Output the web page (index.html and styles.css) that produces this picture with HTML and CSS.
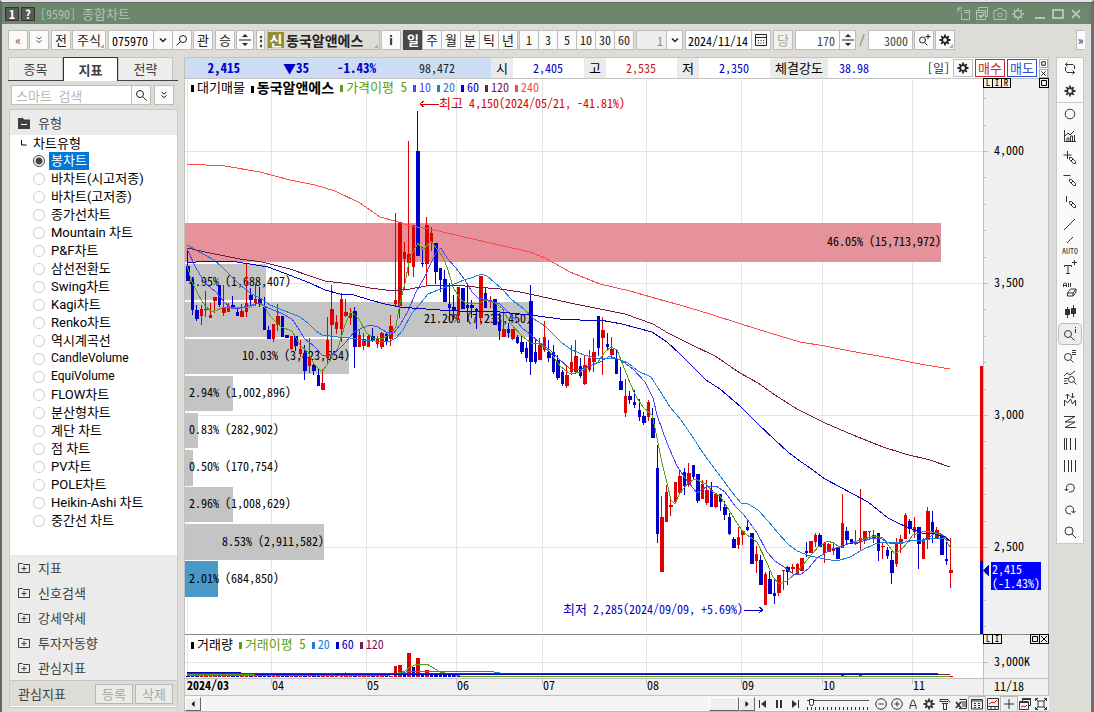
FILE: index.html
```html
<!DOCTYPE html>
<html lang="ko">
<head>
<meta charset="utf-8">
<title>[9590] 종합차트</title>
<link rel="stylesheet" href="styles.css">
</head>
<body>
<svg class="defs" aria-hidden="true">
  <symbol id="gear" viewBox="0 0 12 12"><path d="M6 .5v11M.5 6h11M2.200 2.200l7.600 7.600M9.800 2.200L2.200 9.800" stroke="currentColor" stroke-width="1.800"/><circle cx="6" cy="6" r="2.800" fill="#fafafa" stroke="currentColor" stroke-width="1.800"/></symbol>
  <symbol id="lens" viewBox="0 0 12 12"><circle cx="5" cy="5" r="3.500"/><path d="M7.500 7.500l4 4"/></symbol>
  <symbol id="lensl" viewBox="0 0 12 12"><circle cx="7" cy="5" r="3.500"/><path d="M4.500 7.500l-4 4"/></symbol>
  <symbol id="down" viewBox="0 0 12 12"><path d="M3 4.500l3 3 3-3" stroke-width="1.500"/></symbol>
  <symbol id="box" viewBox="0 0 8 8"><path d="M1.500 1.500h5v5h-5z"/></symbol>
  <symbol id="folder" viewBox="0 0 12 12"><path d="M.5 10.500V1.500h4l1 1h6v8zM6 4v5M3.500 6.500h5"/></symbol>
</svg>

<div class="window">
  <header class="titlebar">
    <span class="tag">1</span><button class="tag">?</button>
    <h1>[9590] <span class="ko">종합차트</span></h1>
    <div class="window-tools">
      <button aria-label="분리"><svg viewBox="0 0 14 14"><path d="M1 5V1h4M1 1l4 4M4.500 6v6.500h8v-9H7M7 5.500h5"/></svg></button>
      <button aria-label="저장"><svg viewBox="0 0 14 14"><path d="M3.500 3V.5h9v9H11M1.500 3.500h9v9h-9zM1.500 5.500h9"/><path d="M4 8l2 2 3-3" stroke-width="2"/></svg></button>
      <button aria-label="캡처"><svg viewBox="0 0 14 14"><path d="M1 3.500h3l1-2h4l1 2h3v9H1z"/><circle cx="7" cy="8" r="2.300"/></svg></button>
      <button aria-label="설정"><svg viewBox="0 0 14 14"><circle cx="7" cy="7" r="3.500" stroke-width="1.500"/><path d="M7 1v2M7 11v2M1 7h2M11 7h2M3 3l1.500 1.500M9.500 9.500L11 11M11 3L9.500 4.500M3 11l1.500-1.500" stroke-width="1.500"/></svg></button>
      <button aria-label="최소화" class="gap"><svg viewBox="0 0 14 14"><path d="M2 11h10" stroke-width="2"/></svg></button>
      <button aria-label="최대화"><svg viewBox="0 0 14 14"><path d="M2 3h10v8H2z" stroke-width="2"/></svg></button>
      <button aria-label="닫기"><svg viewBox="0 0 14 14"><path d="M3 3l8 8M11 3l-8 8" stroke-width="2"/></svg></button>
    </div>
  </header>

  <div class="toolbar">
    <button class="btn dim">«</button>
    <button class="btn dim" aria-label="더보기"><svg class="ico"><path d="M3.500 3l2.500 2 2.500-2M3.500 6.500l2.500 2 2.500-2"/></svg></button>
    <button class="btn ko gapl">전</button>
    <button class="btn ko corner w34">주식</button>
    <div class="joined gapl">
      <input class="field code" aria-label="종목코드" value="075970">
      <button class="btn" aria-label="목록"><svg class="ico"><use href="#down"/></svg></button>
      <button class="btn" aria-label="찾기"><svg class="ico"><use href="#lensl"/></svg></button>
    </div>
    <button class="btn ko">관</button>
    <button class="btn ko gapl">승</button>
    <button class="btn spin" aria-label="종목 이동"><svg viewBox="0 0 12 18"><path d="M-2 9h16"/><path d="M3 6l3-3 3 3zM3 12l3 3 3-3z" fill="currentColor" stroke="none"/></svg></button>
    <button class="btn thin gapl">⋮</button>
    <button class="btn name corner gapl"><span class="badge">신</span>동국알앤에스</button>
    <button class="btn bold">i</button>
    <div class="joined ko gapl">
      <button class="btn on">일</button><button class="btn">주</button><button class="btn">월</button><button class="btn">분</button><button class="btn">틱</button><button class="btn">년</button>
    </div>
    <div class="joined">
      <button class="btn">1</button><button class="btn">3</button><button class="btn">5</button><button class="btn">10</button><button class="btn">30</button><button class="btn">60</button>
    </div>
    <div class="joined gapl">
      <input class="field unit" aria-label="주기" value="1">
      <button class="btn slim" aria-label="주기 목록"><svg class="ico"><use href="#down"/></svg></button>
    </div>
    <div class="joined gapl">
      <input class="field date" aria-label="날짜" value="2024/11/14">
      <button class="btn" aria-label="달력"><svg class="ico"><path d="M.5.500h11v11H.5zM.5 3.500h11M3 6.500h1m1.500 0h1m1.500 0h1M3 9h1m1.500 0h1m1.500 0h1"/></svg></button>
    </div>
    <button class="btn ko off gapl">당</button>
    <div class="joined gapl">
      <input class="field num" aria-label="봉 수" value="170">
      <button class="btn slim" aria-label="봉 수 증감"><svg viewBox="0 0 12 18"><path d="M-2 9h16"/><path d="M3 6l3-3 3 3zM3 12l3 3 3-3z" fill="currentColor" stroke="none"/></svg></button>
    </div>
    <span class="slash">/</span>
    <input class="field num" aria-label="전체 봉 수" value="3000">
    <button class="btn" aria-label="확대 검색"><svg class="ico"><circle cx="4.500" cy="6" r="3"/><path d="M6.500 8.500l3 3M10 0v5M7.500 2.500h5"/></svg></button>
    <button class="btn corner" aria-label="차트 설정"><svg class="ico"><use href="#gear"/></svg></button>
    <button class="btn more">»</button>
  </div>

  <main class="body">
    <aside class="side">
      <nav class="tabs"><button>종목</button><button class="sel">지표</button><button>전략</button></nav>
      <div class="search">
        <div class="joined"><input class="field" aria-label="스마트 검색" placeholder="스마트 검색"><button class="btn" aria-label="검색"><svg class="ico"><use href="#lens"/></svg></button></div>
        <button class="btn" aria-label="펼치기"><svg class="ico"><path d="M3.500 3l2.500 2 2.500-2M3.500 6.500l2.500 2 2.500-2"/></svg></button>
      </div>
      <section class="panel">
        <button class="group"><svg class="ico"><path d="M0 1h5l1 1.500h6V12H0z" fill="currentColor" stroke="none"/><path d="M3 7.500h6" stroke="#fff"/></svg>유형</button>
        <div class="tree" id="tree">
          <div class="root"><svg class="ico"><path d="M3.500 2v5h5"/></svg>차트유형</div>
          <label><input type="radio" name="t" checked><span>봉차트</span></label>
          <label><input type="radio" name="t"><span>바차트(시고저종)</span></label>
          <label><input type="radio" name="t"><span>바차트(고저종)</span></label>
          <label><input type="radio" name="t"><span>종가선차트</span></label>
          <label><input type="radio" name="t"><span>Mountain 차트</span></label>
          <label><input type="radio" name="t"><span>P&amp;F차트</span></label>
          <label><input type="radio" name="t"><span>삼선전환도</span></label>
          <label><input type="radio" name="t"><span>Swing차트</span></label>
          <label><input type="radio" name="t"><span>Kagi차트</span></label>
          <label><input type="radio" name="t"><span>Renko차트</span></label>
          <label><input type="radio" name="t"><span>역시계곡선</span></label>
          <label><input type="radio" name="t"><span class="latin">CandleVolume</span></label>
          <label><input type="radio" name="t"><span class="latin">EquiVolume</span></label>
          <label><input type="radio" name="t"><span>FLOW차트</span></label>
          <label><input type="radio" name="t"><span>분산형차트</span></label>
          <label><input type="radio" name="t"><span>계단 차트</span></label>
          <label><input type="radio" name="t"><span>점 차트</span></label>
          <label><input type="radio" name="t"><span>PV차트</span></label>
          <label><input type="radio" name="t"><span>POLE차트</span></label>
          <label><input type="radio" name="t"><span>Heikin-Ashi 차트</span></label>
          <label><input type="radio" name="t"><span>중간선 차트</span></label>
        </div>
        <button class="group"><svg class="ico"><use href="#folder"/></svg>지표</button>
        <button class="group"><svg class="ico"><use href="#folder"/></svg>신호검색</button>
        <button class="group"><svg class="ico"><use href="#folder"/></svg>강세약세</button>
        <button class="group"><svg class="ico"><use href="#folder"/></svg>투자자동향</button>
        <button class="group"><svg class="ico"><use href="#folder"/></svg>관심지표</button>
        <footer class="foot"><span>관심지표</span><button disabled>등록</button><button disabled>삭제</button></footer>
      </section>
    </aside>

    <section class="center">
      <div class="quote">
        <div class="now"><b class="price">2,415</b><b class="diff">▼35</b><b class="rate">-1.43%</b><span class="vol">98,472</span></div>
        <span class="key">시</span><span class="val">2,405</span>
        <span class="key">고</span><span class="val up">2,535</span>
        <span class="key">저</span><span class="val">2,350</span>
        <span class="key wide">체결강도</span><span class="val strength">38.98</span>
        <span class="period">[일]</span>
        <button class="btn" aria-label="설정"><svg class="ico"><use href="#gear"/></svg></button>
        <button class="trade buy">매수</button>
        <button class="trade sell">매도</button>
        <span class="mini"><button aria-label="최대화"><svg viewBox="0 0 7 8"><path d="M1.500 2h4v4h-4z"/></svg></button><button aria-label="닫기"><svg viewBox="0 0 7 8"><path d="M1 1.500l5 5M6 1.500l-5 5"/></svg></button></span>
      </div>
      <div class="chart">
        <svg id="chart" viewBox="184 79 865 617" preserveAspectRatio="xMinYMin meet"></svg>
        <div class="legend"><span class="c0 ko">대기매물</span><span class="c0 strong">동국알앤에스</span><span class="c5 ko">가격이평 5</span><span class="c10">10</span><span class="c20">20</span><span class="c60">60</span><span class="c120">120</span><span class="c240">240</span></div>
        <div class="legend lower"><span class="c0 ko">거래량</span><span class="c5 ko">거래이평 5</span><span class="c20">20</span><span class="c60">60</span><span class="c120">120</span></div>
        <div class="pane-tools"><button>L</button><button>I</button><button>R</button><button class="last" aria-label="최대화"><svg><use href="#box"/></svg></button></div>
        <div class="pane-tools lower"><button>L</button><button>I</button><button class="last" aria-label="최대화"><svg><use href="#box"/></svg></button><button aria-label="닫기"><svg viewBox="0 0 8 8"><path d="M1 1l6 6M7 1L1 7"/></svg></button></div>
      </div>
      <div class="bottom">
        <button class="arrow" aria-label="왼쪽"><svg viewBox="0 0 8 8"><path d="M5.500 1v6l-3-3z"/></svg></button>
        <div class="track"><div class="thumb"></div></div>
        <button class="arrow" aria-label="오른쪽"><svg viewBox="0 0 8 8"><path d="M2.500 1v6l3-3z"/></svg></button>
        <div class="play">
          <button aria-label="처음"><svg class="ico"><path d="M2.500 2v8"/><path d="M9 2v8L4 6z" fill="currentColor" stroke="none"/></svg></button>
          <button aria-label="정지"><svg class="ico"><path d="M4 2v8M8 2v8" stroke-width="2"/></svg></button>
          <button aria-label="끝"><svg class="ico"><path d="M9.500 2v8"/><path d="M3 2v8l5-4z" fill="currentColor" stroke="none"/></svg></button>
        </div>
        <input type="range" class="speed" aria-label="속도" value="4">
        <div class="tools">
          <button aria-label="축소"><svg class="ico"><circle cx="6" cy="6" r="5.300"/><path d="M3.500 6h5"/></svg></button>
          <button aria-label="확대"><svg class="ico"><circle cx="6" cy="6" r="5.300"/><path d="M3.500 6h5M6 3.500v5"/></svg></button>
          <button aria-label="글자"><svg class="ico"><path d="M3 11V8l2.500-6h1L9 8v3M3.500 7.500h5"/></svg></button>
          <button aria-label="설정"><svg class="ico"><use href="#gear"/></svg></button>
          <button aria-label="도구"><svg class="ico"><path d="M1 1.500h8l2 3M1 3.500h8M1 1.500v2M4.500 5.500v6h3v-6zM3 5.500h6"/></svg></button>
          <button aria-label="엑셀"><svg class="ico"><path d="M4.500 1.500h7v9H4M6 4h5M7 6h4M7 8h4"/><path d="M1 4l5 6M6 4l-5 6" stroke-width="1.800"/></svg></button>
          <button aria-label="표" class="set"><svg class="ico"><path d="M.5 1.500h11v9.500H.5zM.5 3h11M3 5.500h2m2 0h2M3 7.500h2m2 0h2M3 9.500h2m2 0h2"/></svg></button>
          <button aria-label="차트"><svg class="ico"><path d="M.5.500h11v11H.5zM.5 8.500h11M4 8.500v3M8 8.500v3"/><path d="M2 6l3-2 2 1 3-3" stroke="#d00"/></svg></button>
          <button aria-label="십자선" class="set"><svg class="ico"><path d="M6 1v10M1 6h10"/></svg></button>
          <button aria-label="창"><svg class="ico"><path d="M3.500 3V.500h8v7H10M.5 4h9v7.500h-9z"/><path d="M.5 4h9M3.500 1h8" stroke-width="2"/><path d="M2 9l2-1 2 1 2-2" stroke="#d00"/></svg></button>
          <button aria-label="전체화면"><svg class="ico"><path d="M.5 3V.500H3M9 .5h2.500V3M11.500 9v2.500H9M3 11.500H.5V9M3 3h6v6H3zM1 1l2 2M11 1L9 3M1 11l2-2M11 11L9 9"/></svg></button>
        </div>
      </div>
    </section>

    <aside class="rail">
      <button aria-label="새로고침"><svg viewBox="0 0 16 16"><path d="M5.500 1.500l-2 2 2 2M3.500 3.500H11l1.500 1.500v3M3.500 6v3.500L5 11.500h7.500M10.500 9.500l2 2-2 2"/></svg></button>
      <button aria-label="설정"><svg class="ico"><use href="#gear"/></svg></button>
      <hr>
      <button aria-label="원"><svg viewBox="0 0 16 16"><circle cx="8" cy="8" r="4.800"/></svg></button>
      <button aria-label="지표"><svg viewBox="0 0 16 16"><path d="M2.500 2v11.500H14M5 13.500V10h2v3.500M8.500 13.500V8h2v5.500M12.500 13.500V7M3 8l3-3 2 2 4-4"/></svg></button>
      <button aria-label="십자 그리기"><svg viewBox="0 0 16 16"><path d="M5.500 1v8M1.500 5h8"/><path d="M7.500 7.500h2l4 4v2h-2l-4-4zM9 11l2-2"/></svg></button>
      <button aria-label="수평선"><svg viewBox="0 0 16 16"><path d="M1.500 3.500h7"/><path d="M7.500 7.500h2l4 4v2h-2l-4-4zM9 11l2-2"/></svg></button>
      <button aria-label="수직선"><svg viewBox="0 0 16 16"><path d="M4.500 2v6"/><path d="M7.500 7.500h2l4 4v2h-2l-4-4zM9 11l2-2"/></svg></button>
      <button aria-label="추세선"><svg viewBox="0 0 16 16"><path d="M2 14L13 3"/></svg></button>
      <button aria-label="자동 추세선" class="word"><svg viewBox="0 0 16 7"><path d="M5 6l6-6"/></svg>AUTO</button>
      <button aria-label="텍스트"><svg viewBox="0 0 16 16"><path d="M2.500 7V5.500h7V7M6 5.500v8M4 13.500h4M12.500 0v5M10 2.500h5"/></svg></button>
      <button aria-label="전체 지우기"><svg viewBox="0 0 16 16"><path d="M1.500 5V2l1-1h1l1 1v3M1.500 3.500h3M6.500 1v4M8.500 1v4M5.500 11l3-4h5.500l-3 4zM5.500 11v3h5.500v-3M11 14l3-4V7"/></svg></button>
      <button aria-label="봉"><svg viewBox="0 0 16 16"><path d="M5.500 3v11M11.500 1v12"/><path d="M3 5h5v6H3zM9 4h5v6H9z" fill="currentColor" stroke="none"/></svg></button>
      <button aria-label="정보" class="set"><svg viewBox="0 0 16 16"><circle cx="6" cy="8" r="3.500"/><path d="M8.500 10.500l4 4M13.500 1v1M13.500 3v4"/></svg></button>
      <button aria-label="목록 보기"><svg viewBox="0 0 16 16"><circle cx="6" cy="9" r="3.500"/><path d="M8.500 11.500l3 3M10 2.500h4M10 4.500h4M10 6.500h4"/></svg></button>
      <button aria-label="패턴 보기"><svg viewBox="0 0 16 16"><path d="M2 6l3-3 3 2 5-4M2 8.500h4M2 11h3M2 13.500h4"/><circle cx="9.500" cy="9.500" r="3"/><path d="M11.500 11.500l3 3"/></svg></button>
      <button aria-label="매매 신호"><svg viewBox="0 0 16 16"><path d="M2.500 14V8l3 3 3-4 2 5 3-4v6M5.500 7V2M3.500 4l2-2 2 2M10.500 1v5M8.500 4l2 2 2-2"/></svg></button>
      <button aria-label="지그재그"><svg viewBox="0 0 16 16"><path d="M2 2.500h11L3 8h10L3 13.500h11"/></svg></button>
      <button aria-label="간격선"><svg viewBox="0 0 16 16"><path d="M2.500 2v12M4.500 2v12M8.500 2v12M13.500 2v12"/></svg></button>
      <button aria-label="등간격선"><svg viewBox="0 0 16 16"><path d="M2.500 2v12M6.500 2v12M9.500 2v12M13.500 2v12"/></svg></button>
      <button aria-label="되돌리기"><svg viewBox="0 0 16 16"><path d="M4.500 11V7.500a4 4 0 1 1 4 4.500H7M2.500 9l2 2 2-2"/></svg></button>
      <button aria-label="다시 실행"><svg viewBox="0 0 16 16"><path d="M11.500 11V7.500a4 4 0 1 0-4 4.500H9M9.500 9l2 2 2-2"/></svg></button>
      <button aria-label="돋보기"><svg viewBox="0 0 16 16"><circle cx="7" cy="7" r="4"/><path d="M10 10l4 4"/></svg></button>
    </aside>
  </main>
</div>
<script src="chart.js"></script>
</body>
</html>
```
FILE: styles.css
```css
* { box-sizing: border-box; }
body {
  margin: 0;
  font: 12px/16px "Noto Sans Mono CJK KR", "Liberation Sans", "Noto Sans CJK KR", sans-serif;
  color: #000;
  background: #dddcd6;
}
button, input { font: inherit; color: inherit; margin: 0; padding: 0; }
button { border: 0; background: none; white-space: nowrap; }
svg { display: block; fill: none; stroke: currentColor; stroke-width: 1; }
.defs { position: absolute; width: 0; height: 0; }
.ico { width: 12px; height: 12px; overflow: visible; }
.ko { font-size: 13px; }

.window {
  display: flex;
  flex-direction: column;
  min-height: 100vh;
  border-top: 2px solid #e4e6e8;
  border-left: 2px solid #666;
  border-right: 3px solid #6c6e74;
}
.titlebar {
  display: flex;
  align-items: center;
  height: 22px;
  padding: 0 8px 0 3px;
  gap: 2px;
  border-top: 1px solid #666;
  background: #6c876c;
  color: #b8c0b8;
}
.titlebar h1 { margin: 0 0 0 3px; font-size: 12px; font-weight: 400; }
.titlebar .ko { font-size: 13px; }
.tag {
  width: 14px; height: 14px;
  border: 1px solid #333;
  background: #585858;
  color: #fff;
  font-weight: 700;
  line-height: 12px;
  text-align: center;
}
.window-tools { display: flex; gap: 4px; margin-left: auto; }
.window-tools svg { width: 14px; height: 14px; }
.window-tools .gap { margin-left: 4px; }

.toolbar {
  display: flex;
  align-items: center;
  gap: 1px;
  padding: 6px 6px 7px 6px;
}
.btn {
  display: flex;
  flex: none;
  align-items: center;
  justify-content: center;
  position: relative;
  width: 20px; height: 20px;
  border: 1px solid #bcbcb8;
  background: #fafafa;
  color: #222;
}
.btn svg { flex: none; }
.joined { display: flex; }
.joined > .btn { margin-left: -1px; }
.joined > .btn:first-child { margin-left: 0; }
.dim { color: #555; }
.gapl { margin-left: 1px; }
.w34 { width: 34px; }
.corner::after {
  content: "";
  position: absolute;
  right: 1px; bottom: 1px;
  border: 2px solid #aaa;
  border-top-color: transparent;
  border-left-color: transparent;
}
.spin { width: 18px; }
.slim { width: 17px; }
.spin svg, .slim svg[viewBox] { width: 12px; height: 18px; }
.thin { width: 9px; font-weight: 700; }
.name {
  width: 113px;
  justify-content: flex-start;
  gap: 2px;
  background: #dddcd6;
  font-size: 14px;
  font-weight: 700;
}
.badge { width: 16px; height: 16px; background: #988c30; color: #fff; }
.bold { font-weight: 700; }
.on { background: #484848; border-color: #484848; color: #fff; font-weight: 700; }
.off { color: #a8a890; background: #f0f0ec; }
.field {
  height: 20px;
  min-width: 0;
  border: 1px solid #bcbcb8;
  background: #fff;
  border-radius: 0;
  outline: 0;
}
.code { width: 46px; padding-left: 3px; }
.unit { width: 31px; padding-right: 3px; text-align: right; background: #eee; color: #888; }
.date { width: 67px; padding-left: 2px; }
.num { width: 45px; padding-right: 4px; text-align: right; color: #444; }
.slash { width: 10px; text-align: center; color: #666; }
.more { width: 9px; margin-left: auto; border-right-color: #fff; }

.body { display: flex; flex: 1; }
.side { display: flex; flex-direction: column; flex: none; width: 176px; padding: 0 0 0 6px; color: #404040; font-size: 13px; }
.tabs { display: flex; border-bottom: 1px solid #444; height: 24px; }
.tabs button { width: 55px; height: 23px; border: 1px solid #c4c4c0; border-bottom: 0; background: #eee; }
.tabs .sel { height: 24px; border: 1px solid #333; border-bottom: 0; background: #fff; font-weight: 700; }
.search { display: flex; gap: 3px; padding: 4px 4px 3px 3px; }
.search .joined { flex: 1; }
.search .field { flex: 1; width: 0; padding-left: 4px; }
.field::placeholder { color: #b8b8b8; opacity: 1; }
.panel {
  display: flex;
  flex-direction: column;
  flex: 1;
  margin: 1px 0 4px 1px;
  border: 1px solid #c8c8c4;
  background: #ebebeb;
}
.group { display: flex; align-items: center; gap: 8px; height: 25px; padding-left: 8px; }
.tree {
  flex: 1;
  background: #fff;
  color: #000;
  font: 13px/17px Roboto, "Noto Sans CJK KR", sans-serif;
}
.tree .root { display: flex; align-items: center; gap: 3px; height: 17px; padding-left: 8px; }
.tree label { display: flex; align-items: center; gap: 4px; height: 18px; padding-left: 23px; }
.tree input {
  appearance: none;
  width: 12px; height: 12px;
  border: 1px solid #ccc;
  border-radius: 50%;
}
.tree input:checked { border-color: #444; background: radial-gradient(#444 3px, #fff 4px); }
.tree span { height: 18px; padding: 0 2px; }
.tree .latin { font-size: 12px; }
.tree input:checked + span { background: #0078d7; color: #fff; }
.foot {
  display: flex;
  align-items: center;
  gap: 2px;
  height: 27px;
  padding: 0 4px 0 8px;
  border-top: 1px solid #c4c4c0;
  border-bottom: 1px solid #fff;
  background: #dddcd6;
}
.foot span { margin-right: auto; }
.foot button { width: 38px; height: 20px; border: 1px solid #b8b8b4; background: #ebebe8; color: #a8a8a0; }

.center { display: flex; flex: 1; flex-direction: column; min-width: 0; margin-left: 6px; border-left: 1px solid #c0c0c0; }
.quote { display: flex; align-items: center; height: 22px; border: 1px solid #c4c4c4; border-left: 0; background: #fff; }
.now { display: flex; align-items: center; width: 306px; height: 20px; background: #ccdcf2; color: #0000c8; }
.now > * { text-align: right; }
.now b { font-size: 13px; }
.price { width: 55px; }
.diff { width: 69px; }
.rate { width: 67px; }
.vol { width: 79px; color: #222; }
.key { width: 22px; height: 20px; line-height: 20px; text-align: center; background: #ebebeb; font-size: 13px; }
.key.wide { width: 58px; }
.val { width: 71px; padding-right: 21px; text-align: right; color: #0000c8; }
.val.up { color: #c81818; }
.val.strength { padding-right: 30px; }
.period { margin-left: auto; color: #333; margin-right: 3px; }
.trade { width: 30px; height: 18px; margin-left: 2px; border: 1px solid #c82828; background: #fff; color: #c82828; font-size: 13px; line-height: 16px; }
.trade.sell { border-color: #2850d0; color: #2850d0; }
.quote .btn { height: 18px; }
.mini { display: flex; flex-direction: column; gap: 1px; margin-left: 2px; }
.mini button { border: 1px solid #aaa; width: 9px; height: 9px; }
.mini svg { width: 7px; height: 7px; }

.chart { position: relative; flex: 1; }
#chart { width: calc(100% + 1px); margin-left: -1px; }
#chart text { fill: #000; stroke: none; font-size: 12px; white-space: pre; }
#chart .ko { font-size: 13px; }
.legend { position: absolute; top: 0; left: 6px; display: flex; gap: 6px; white-space: pre; }
.legend.lower { top: 557px; }
.legend span::before { content: ""; display: inline-block; width: 3px; height: 7px; margin-right: 3px; background: currentColor; }
.strong { font-size: 14px; font-weight: 700; }
.c0 { color: #000; } .c5 { color: #58a010; } .c10 { color: #4848ff; } .c20 { color: #1880d8; }
.c60 { color: #0000c8; } .c120 { color: #781850; } .c240 { color: #ff4848; }
.pane-tools { position: absolute; top: -1px; right: 1px; width: 65px; display: flex; }
.pane-tools.lower { top: 555px; }
.pane-tools button { width: 10px; height: 10px; margin-right: -1px; border: 1px solid #000; font-size: 9px; line-height: 8px; background: #f0f0f0; }
.pane-tools svg { width: 8px; height: 8px; }
.pane-tools .last { margin-left: auto; }

.bottom { display: flex; align-items: center; height: 16px; border-bottom: 1px solid #bbb; background: #f4f4f4; }
.arrow { display: grid; place-items: center; width: 16px; height: 14px; border: 1px solid #fff; border-right-color: #666; border-bottom-color: #666; background: #eee; }
.arrow svg { width: 8px; height: 8px; fill: #000; stroke: none; }
.track { display: flex; justify-content: flex-end; flex: 1; height: 14px; background: repeating-conic-gradient(#fff 0 25%, #ececec 0 50%) 0 0/2px 2px; }
.thumb { width: 30px; border: 1px solid #fff; border-right-color: #666; border-bottom-color: #666; background: #f0f0f0; }
.play, .tools { display: flex; color: #333; }
.play button, .tools button { display: grid; place-items: center; width: 16px; height: 14px; }
.set { outline: 1px solid #bbb; background: #eee; }
.speed {
  appearance: none;
  width: 62px; height: 14px;
  margin: 0 4px;
  background:
    linear-gradient(#555, #555) 0 3px/100% 1px no-repeat,
    repeating-linear-gradient(90deg, #333 0 1px, transparent 1px 4px) 0 10px/100% 3px no-repeat;
}
.speed::-webkit-slider-thumb { appearance: none; width: 5px; height: 7px; margin-top: -3px; border: 1px solid #222; background: #fff; border-radius: 0 0 3px 3px; }

.rail {
  align-self: flex-start;
  flex: none;
  width: 28px;
  margin: 0 7px;
  border: 1px solid #c8c8c8;
  background: #fafafa;
  color: #333;
}
.rail button { display: grid; place-items: center; width: 26px; height: 22px; }
.rail svg { width: 16px; height: 16px; }
.rail .ico { width: 12px; height: 12px; }
.rail hr { margin: 0; border: 0; border-top: 1px solid #c8c8c8; }
.rail .word { font-size: 8px; line-height: 8px; }
.rail .word svg { height: 7px; }
.rail .set { width: 22px; margin: 0 2px; height: 20px; margin-top: 1px; margin-bottom: 1px; border-radius: 3px; }
```
FILE: chart.js
```js
const RED = '#e00000', BLUE = '#0000c8', GRID = '#e4e4e4', BORDER = '#c0c0c0';
const out = [];
const rect = (x, y, w, h, fill) => out.push(`<rect x="${x}" y="${y}" width="${w}" height="${h}" fill="${fill}" stroke="none"/>`);
const text = (x, y, s, fill = '#000', extra = '') => out.push(`<text x="${x}" y="${y}" style="fill:${fill}" ${extra}>${s}</text>`);
const line = (pts, color) => out.push(`<polyline points="${pts}" stroke="${color}"/>`);

// panes and axes
rect(185, 79, 798, 599, '#fff');
rect(983, 79, 65, 617, '#f0f0f0');
rect(185, 678, 798, 18, '#f0f0f0');

// month grid
const months = [[187, '2024/03'], [271, '04'], [366, '05'], [456, '06'], [542, '07'], [646, '08'], [741, '09'], [822, '10'], [912, '11']];
for (const [x, label] of months) {
  rect(x, 80, 1, 552, GRID);
  rect(x, 636, 1, 42, GRID);
  rect(x, 678, 1, 6, BORDER);
  text(label.length > 2 ? x : x + 1, 690, label, '#000', label.length > 2 ? 'style="font-size:13px" font-weight="700"' : '');
}
for (const y of [151, 283, 415, 547, 662]) rect(185, y, 798, 1, GRID);

// volume profile: y, height, right edge, colour
const profile = [
  [223, 39, 941, '#e5929a'], [264, 36, 266], [302, 35, 531], [339, 35, 349], [376, 35, 233],
  [413, 35, 198], [450, 36, 193], [487, 35, 233], [524, 36, 324], [561, 36, 218, '#4898c8']];
for (const [y, h, r, fill = '#c4c4c4'] of profile) rect(185, y, r - 185, h, fill);
const share = [
  [827, 246, '46.05% (15,713,972)'], [189, 286, '4.95% (1,688,407)'], [424, 323, '21.20% (7,233,450)'],
  [242, 360, '10.03% (3,423,654)'], [189, 397, '2.94% (1,002,896)'], [189, 434, '0.83% (282,902)'],
  [189, 471, '0.50% (170,754)'], [189, 508, '2.96% (1,008,629)'], [222, 546, '8.53% (2,911,582)'], [189, 583, '2.01% (684,850)']];
for (const [x, y, s] of share) text(x, y, s);

// candles: direction, high, body top, body bottom, low
const candles = `B249,266,281,281 B277,279,310,315 B305,310,319,321 R305,309,316,325 R291,309,310,317 R303,315,318,318 R297,297,301,313 B285,285,305,307 R285,307,313,316 R303,306,312,312
B296,305,308,308 B308,312,316,316 R304,311,317,317 R263,303,312,317 B288,295,300,305 R284,299,303,306 B287,299,303,307 B297,307,330,330 B326,330,339,339 R324,324,339,342
R304,316,325,331 B316,316,337,337 B335,335,338,338 R336,336,349,350 B336,336,346,351 R340,349,354,357 B345,353,371,380 R338,357,366,373 B362,365,371,375 B369,375,386,386
R369,383,390,390 R317,340,358,363 R285,309,325,355 R315,322,329,334 R293,299,329,342 R299,312,316,317 R308,313,318,325 B307,311,347,368 R330,335,347,347 R333,339,346,350
R335,336,347,347 B328,336,340,342 R336,338,344,348 R332,333,347,349 B333,334,342,345 R315,326,339,346 R213,300,304,306 R222,222,306,318 R242,252,259,289 R141,254,263,276
R225,225,267,277 B111,151,256,256 B247,263,264,267 R217,225,264,285 R227,233,242,251 B243,243,272,284 B268,268,280,292 B270,279,302,302 B283,304,308,320 B295,307,310,320
R287,287,316,320 B288,288,309,309 B283,305,308,322 B300,305,308,318 B308,309,312,329 R276,276,318,323 B288,293,308,308 R296,300,301,308 B299,299,325,325 B313,322,331,340
R309,329,337,337 B323,329,333,338 R329,329,339,340 B335,337,343,344 B336,342,352,354 B342,348,358,362 B285,301,362,375 B338,352,362,364 R338,345,360,360 R321,337,350,352
B340,352,358,362 B345,352,372,374 B355,360,378,380 B370,372,384,386 R366,375,386,388 R345,362,372,375 R340,356,372,374 B358,366,376,378 R355,365,384,385 R350,358,370,372
R338,352,362,372 B316,316,348,356 R317,330,338,375 B333,344,347,351 R337,349,355,358 B349,359,374,374 B367,381,390,390 R379,396,413,417 B391,396,400,404 B390,402,405,408
B399,410,417,421 B412,416,423,425 R400,402,417,421 B408,418,438,438 B445,468,534,543 R496,517,572,572 R485,492,522,522 R497,505,507,516 R482,482,502,504 R470,476,493,493
B468,472,486,495 R463,473,485,487 B465,465,477,480 B474,474,501,503 R480,484,499,499 R480,490,503,505 B482,490,507,507 R494,494,507,508 B494,494,502,511 B501,507,515,520
B513,517,534,535 B537,539,548,548 R527,537,545,549 R530,531,535,545 B519,527,530,531 B533,533,564,564 R546,554,561,573 B555,560,585,585 R572,574,605,605 B571,579,594,594
B579,593,596,604 R575,575,593,596 R570,570,571,590 B566,567,572,585 R564,567,569,574 R563,564,574,574 R558,558,571,571 B542,551,553,557 R541,541,553,553 R533,535,542,547
B533,535,547,547 R542,543,553,563 R543,544,552,552 R542,548,551,555 B547,547,559,559 R494,523,548,548 B527,531,540,544 B539,539,544,544 R530,543,544,545 R489,538,542,551
R531,531,541,544 R531,531,532,540 R530,535,538,543 B533,533,551,561 R542,546,547,559 B547,550,556,559 B551,560,573,584 R538,543,564,567 R535,539,543,553 R513,515,539,539
B519,521,529,534 R517,527,532,538 B527,527,544,569 R538,540,559,559 R507,511,540,549 B511,522,533,543 R527,530,538,538 B536,536,555,555 B537,559,561,565 R538,570,573,588`.split(/\s+/);
const volume = { 46: 11, 47: 12, 48: 5, 49: 24, 50: 10, 51: 19, 52: 4, 53: 7, 54: 3, 55: 3, 56: 3, 57: 3, 58: 3, 59: 3, 60: 3, 145: 4, 149: 3 };
const rising = new Set([46, 47, 49, 51, 53, 145, 149]);
candles.forEach((c, i) => {
  const color = c[0] === 'R' ? RED : BLUE;
  const [high, top, bottom, low] = c.slice(1).split(',').map(Number);
  const x = 187.500 + 4.515 * i;
  const left = Math.round(x - 1.500), width = Math.round(x + 2) - left;
  rect(left + 1, high, 1, low - high, color);
  rect(left, top, width, Math.max(1, bottom - top), color);
  const v = volume[i] || 1;
  rect(left, 677 - v, width, v, v > 1 ? (rising.has(i) ? RED : BLUE) : color);
});

// moving averages
line('187,266 192,282 198,294 205,306 212,312 222,308 232,307 250,307 258,303 264,306 270,316 281,327 292,331 300,345 308,352 314,364 322,372 331,359 338,348 345,325 351,311 359,319 366,332 374,339 384,338 392,333 396,326 400,303 405,283 410,257 418,243 423,250 431,241 436,248 443,257 448,270 453,287 460,299 466,303 477,304 485,300 495,303 502,308 510,323 522,336 531,343 540,344 550,352 560,366 570,374 580,372 590,366 598,362 604,353 611,347 617,350 623,365 630,383 637,398 643,407 652,415 655,428 662,463 667,483 671,500 675,504 680,493 688,483 695,479 706,484 713,492 720,496 727,507 737,523 743,532 757,542 767,563 773,577 779,584 787,581 797,572 807,560 818,547 828,541 833,543 840,547 850,543 860,540 875,536 883,538 895,554 903,548 913,535 922,532 928,531 942,535 946,540 951,549', '#58a010');
line('187,249 196,268 205,283 216,292 224,302 231,308 240,308 252,305 260,303 268,308 281,313 292,319 300,331 304,338 315,347 322,355 330,356 338,350 346,342 354,332 362,328 370,325 378,327 386,332 394,333 400,325 408,311 416,292 424,278 430,265 436,253 441,248 447,258 455,267 465,280 472,292 478,298 488,300 500,304 508,312 516,320 522,328 531,335 540,343 550,350 558,358 570,369 582,369 592,365 600,362 610,356 622,361 633,369 645,382 653,398 657,415 663,432 669,448 677,466 685,478 697,493 706,487 716,486 725,492 735,506 743,514 750,523 757,533 767,552 775,561 787,569 793,574 800,575 808,569 817,558 825,553 832,549 840,547 850,543 860,542 873,538 880,538 889,543 900,544 908,541 922,540 930,537 936,532 943,535 950,541', '#4848ff');
line('187,245 196,250 205,255 214,260 222,267 230,275 240,285 250,293 260,298 270,305 282,310 293,314 300,317 309,324 316,331 322,335 338,337 350,338 362,340 375,341 390,341 396,338 403,330 412,313 420,304 428,294 438,290 452,285 464,280 474,277 481,274 487,276 494,282 502,289 512,300 524,309 534,319 545,326 552,333 562,343 572,350 584,355 596,358 608,358 618,359 628,363 638,371 651,377 660,391 670,407 681,420 692,436 701,450 711,464 721,477 731,491 741,503 748,504 758,510 768,521 778,533 788,544 797,551 810,556 825,559 837,561 850,557 862,550 875,544 885,542 900,543 915,540 925,540 935,538 945,539 950,541', '#1880d8');
line('187,263 205,261 230,261 250,264 268,267 284,273 297,278 310,283 325,290 340,294 354,295 370,300 385,304 400,307 412,308 440,310 458,311 478,311 500,312 530,315 560,319 580,320 600,320 622,324 652,332 667,342 680,354 696,370 706,380 720,389 741,407 758,424 775,440 788,452 797,459 810,468 825,479 840,487 853,494 868,502 878,510 888,518 900,524 912,529 922,533 935,534 945,537 950,541', '#0000c8');
line('187,248 210,253 240,259 262,262 290,269 310,276 325,281 350,284 370,288 394,291 410,289 432,285 455,285 475,287 500,289 520,292 548,298 570,303 600,309 625,314 653,324 668,333 690,344 715,356 740,373 758,383 775,395 797,409 825,423 853,435 868,441 883,447 905,454 930,460 950,467', '#781850');
line('187,164 225,166 260,172 290,180 315,185 335,191 360,203 380,217 395,221 410,226 430,229 460,236 490,243 530,252 545,258 570,272 600,284 630,291 665,301 680,305 710,314 741,324 770,333 800,342 825,346 850,351 890,358 920,364 950,369', '#ff4848');

// volume averages
line('187,674 330,674 345,673 395,674 405,671 410,667 418,664 427,664 435,669 440,672 460,676 950,676', '#58a010');
line('187,675 390,675 412,671 488,671 500,673 950,675', '#1880d8');
line('187,672 231,672 250,674 950,675', '#0000c8');
line('187,673 520,673 938,674 950,675', '#781850');

// high and low marks
text(439, 108, '<tspan class="ko">최고</tspan> 4,150(2024/05/21, -41.81%)', '#d80000');
line('439,104 420,104', '#d80000');
line('424,101 420,104 424,107', '#d80000');
text(563, 614, '<tspan class="ko">최저</tspan> 2,285(2024/09/09, +5.69%)', BLUE);
line('744,610 763,610', BLUE);
line('759,607 763,610 759,613', BLUE);

// price axis
rect(980, 366, 3, 195, RED);
rect(980, 561, 3, 74, BLUE);
rect(983, 79, 1, 617, BORDER);
rect(1048, 79, 1, 617, BORDER);
for (let p = 2200; p <= 4200; p += 100) rect(984, Math.round(547 - (p - 2500) * 0.264), p % 500 ? 2 : 4, 1, BORDER);
[[151, '4,000'], [283, '3,500'], [415, '3,000'], [547, '2,500'], [662, '3,000K']].forEach(([y, s]) => text(994, y + 4, s));
rect(984, 662, 4, 1, BORDER);
rect(991, 562, 50, 28, '#0000ff');
text(992, 574, '2,415<tspan x="992" dy="14">(-1.43%)</tspan>', '#fff');
out.push('<path d="M989 565v11l-6-5.500z" fill="#0000c8" stroke="none"/>');
text(994, 691, '11/18');

// pane dividers
rect(185, 634, 864, 1, '#888');
rect(185, 678, 864, 1, BORDER);
rect(185, 695, 864, 1, BORDER);

const svg = document.getElementById('chart');
svg.setAttribute('shape-rendering', 'crispEdges');
svg.innerHTML = out.join('');
```
